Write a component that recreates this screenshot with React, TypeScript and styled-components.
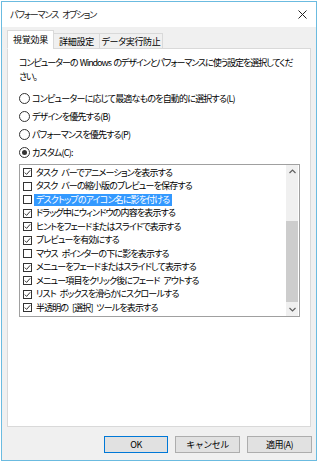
import React from "react";
import styled, { createGlobalStyle } from "styled-components";

const GlobalStyle = createGlobalStyle`
  html, body { margin: 0; padding: 0; background: #ffffff; }
  body {
    font-family: "Noto Sans CJK JP", "Noto Sans", sans-serif;
    font-feature-settings: "palt";
    color: #000;
  }
  * { box-sizing: border-box; }
`;

const Window = styled.div`
  width: 316px;
  height: 460px;
  margin: 1px 0 0 1px;
  border: 1px solid #6bbbe0;
  background: #f0f0f0;
  display: flex;
  flex-direction: column;
`;

const TitleBar = styled.div`
  height: 25px;
  background: #ffffff;
  display: flex;
  align-items: center;
  justify-content: space-between;
  padding: 0 6px 0 8px;
`;

const Title = styled.span`
  font-size: 9px;
  letter-spacing: -1.1px;
  word-spacing: 3px;
  color: #1a1a1a;
`;

const Close = styled.svg`
  width: 9px;
  height: 9px;
  margin-right: 3px;
`;

const Body = styled.div`
  flex: 1;
  display: flex;
  flex-direction: column;
  padding: 0 5px 0 5px;
`;

const TabStrip = styled.div`
  height: 22px;
  display: flex;
  align-items: flex-end;
  position: relative;
  z-index: 1;
  margin-bottom: -1px;
`;

const Tab = styled.div<{ $active?: boolean; $w: number }>`
  width: ${(p) => p.$w}px;
  height: ${(p) => (p.$active ? 19 : 16)}px;
  display: flex;
  align-items: center;
  justify-content: center;
  font-size: 9px;
  letter-spacing: -0.3px;
  background: ${(p) => (p.$active ? "#ffffff" : "#f0f0f0")};
  border: 1px solid #d9d9d9;
  border-bottom: ${(p) => (p.$active ? "1px solid #ffffff" : "1px solid #d9d9d9")};
  margin-left: ${(p) => (p.$active ? "0" : "-1px")};
  padding-top: ${(p) => (p.$active ? "0" : "1px")};
`;

const Panel = styled.div`
  height: 379px;
  background: #ffffff;
  border: 1px solid #d9d9d9;
  padding: 7px 10px 0 11px;
  display: flex;
  flex-direction: column;
`;

const Desc = styled.p`
  margin: 0 0 6px 0;
  font-size: 9px;
  letter-spacing: -1.05px;
  word-spacing: 1.5px;
  line-height: 13.5px;
  white-space: nowrap;
`;

const RadioRow = styled.label`
  height: 18.2px;
  display: flex;
  align-items: center;
  font-size: 9px;
  letter-spacing: -0.8px;
  gap: 2px;
`;

const RadioCircle = styled.span<{ $on?: boolean }>`
  width: 11px;
  height: 11px;
  border-radius: 50%;
  border: 1px solid #333333;
  background: #ffffff;
  display: flex;
  align-items: center;
  justify-content: center;
  flex-shrink: 0;
  &::after {
    content: "";
    width: 5px;
    height: 5px;
    border-radius: 50%;
    background: ${(p) => (p.$on ? "#333333" : "transparent")};
  }
`;

const ListBox = styled.div`
  width: 281px;
  height: 153px;
  margin-top: 2px;
  border: 1px solid #a0a0a0;
  display: flex;
  background: #ffffff;
`;

const Items = styled.div`
  flex: 1;
  padding-top: 1px;
  overflow: hidden;
`;

const Item = styled.div`
  height: 13.5px;
  display: flex;
  align-items: center;
  padding-left: 3px;
  font-size: 9px;
  letter-spacing: -0.85px;
  word-spacing: 2.5px;
  white-space: nowrap;
`;

const Check = styled.span`
  width: 9px;
  height: 9px;
  border: 1px solid #333333;
  background: #ffffff;
  flex-shrink: 0;
  margin-right: 2px;
  display: flex;
`;

const ItemText = styled.span<{ $sel?: boolean }>`
  padding: 0 2px;
  line-height: 12px;
  background: ${(p) => (p.$sel ? "#3399ff" : "transparent")};
  color: ${(p) => (p.$sel ? "#ffffff" : "#000000")};
`;

const ScrollBar = styled.div`
  width: 12px;
  background: #f0f0f0;
  display: flex;
  flex-direction: column;
  margin-right: 1px;
`;

const Arrow = styled.div`
  height: 13px;
  display: flex;
  align-items: center;
  justify-content: center;
`;

const Track = styled.div`
  flex: 1;
  display: flex;
  flex-direction: column;
  justify-content: flex-end;
  padding-bottom: 1px;
`;

const Thumb = styled.div`
  height: 81px;
  background: #cdcdcd;
`;

const ButtonRow = styled.div`
  display: flex;
  justify-content: flex-end;
  gap: 7px;
  margin-top: 9px;
  margin-right: -1px;
`;

const Button = styled.button<{ $default?: boolean }>`
  width: ${(p) => (p.$default ? 64 : 65)}px;
  height: 17px;
  padding: 0;
  font-family: inherit;
  font-size: 9px;
  letter-spacing: -0.5px;
  color: #000;
  background: #e1e1e1;
  border: 1px solid ${(p) => (p.$default ? "#0078d7" : "#adadad")};
  display: flex;
  align-items: center;
  justify-content: center;
`;

const items: { text: string; checked: boolean; sel?: boolean }[] = [
  { text: "タスク バーでアニメーションを表示する", checked: true },
  { text: "タスク バーの縮小版のプレビューを保存する", checked: false },
  { text: "デスクトップのアイコン名に影を付ける", checked: false, sel: true },
  { text: "ドラッグ中にウィンドウの内容を表示する", checked: true },
  { text: "ヒントをフェードまたはスライドで表示する", checked: true },
  { text: "プレビューを有効にする", checked: true },
  { text: "マウス ポインターの下に影を表示する", checked: false },
  { text: "メニューをフェードまたはスライドして表示する", checked: true },
  { text: "メニュー項目をクリック後にフェード アウトする", checked: true },
  { text: "リスト ボックスを滑らかにスクロールする", checked: true },
  { text: "半透明の [選択] ツールを表示する", checked: true },
];

const radios = [
  { text: "コンピューターに応じて最適なものを自動的に選択する(L)", on: false },
  { text: "デザインを優先する(B)", on: false },
  { text: "パフォーマンスを優先する(P)", on: false },
  { text: "カスタム(C):", on: true },
];

const CheckMark = () => (
  <svg width="7" height="7" viewBox="0 0 7 7">
    <polyline points="0.8,3.6 2.6,5.4 6.2,1.3" fill="none" stroke="#333" strokeWidth="1" />
  </svg>
);

export default function App() {
  return (
    <>
      <GlobalStyle />
      <Window>
        <TitleBar>
          <Title>パフォーマンス オプション</Title>
          <Close viewBox="0 0 9 9">
            <path d="M0.5 0.5 L8.5 8.5 M8.5 0.5 L0.5 8.5" stroke="#222" strokeWidth="1" />
          </Close>
        </TitleBar>
        <Body>
          <TabStrip>
            <Tab $active $w={47}>視覚効果</Tab>
            <Tab $w={47}>詳細設定</Tab>
            <Tab $w={64}>データ実行防止</Tab>
          </TabStrip>
          <Panel>
            <Desc>
              コンピューターの Windows のデザインとパフォーマンスに使う設定を選択してくだ
              <br />
              さい。
            </Desc>
            {radios.map((r) => (
              <RadioRow key={r.text}>
                <RadioCircle $on={r.on} />
                {r.text}
              </RadioRow>
            ))}
            <ListBox>
              <Items>
                {items.map((it) => (
                  <Item key={it.text}>
                    <Check>{it.checked && <CheckMark />}</Check>
                    <ItemText $sel={it.sel}>{it.text}</ItemText>
                  </Item>
                ))}
              </Items>
              <ScrollBar>
                <Arrow>
                  <svg width="7" height="5" viewBox="0 0 7 5">
                    <polyline points="0.5,4 3.5,1 6.5,4" fill="none" stroke="#606060" strokeWidth="1.2" />
                  </svg>
                </Arrow>
                <Track>
                  <Thumb />
                </Track>
                <Arrow>
                  <svg width="7" height="5" viewBox="0 0 7 5">
                    <polyline points="0.5,1 3.5,4 6.5,1" fill="none" stroke="#606060" strokeWidth="1.2" />
                  </svg>
                </Arrow>
              </ScrollBar>
            </ListBox>
          </Panel>
          <ButtonRow>
            <Button $default>OK</Button>
            <Button>キャンセル</Button>
            <Button>適用(A)</Button>
          </ButtonRow>
        </Body>
      </Window>
    </>
  );
}
